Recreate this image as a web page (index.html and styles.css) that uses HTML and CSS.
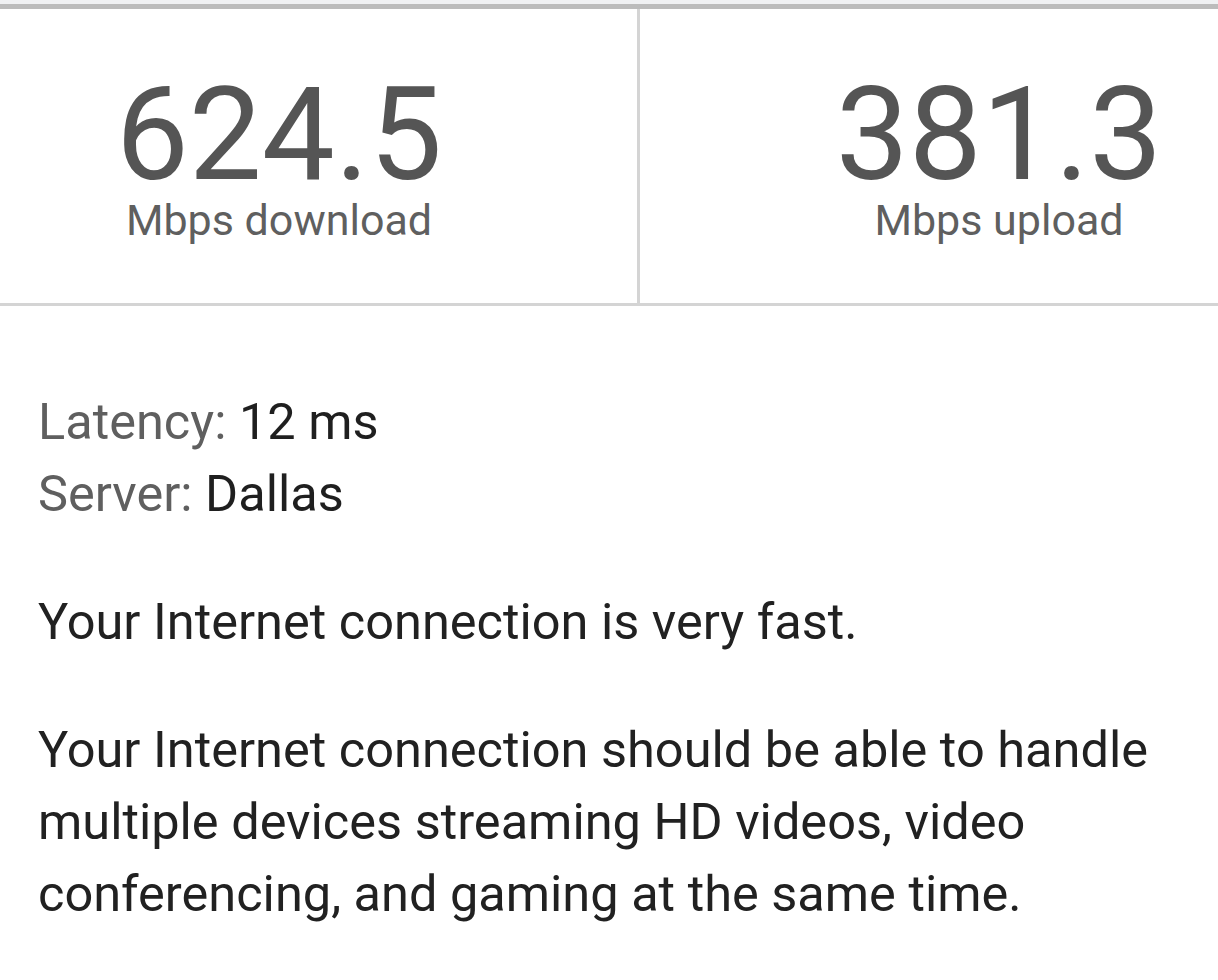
FILE: index.html
```html
<!DOCTYPE html>
<html lang="en">
<head>
  <meta charset="UTF-8" />
  <meta name="viewport" content="width=device-width, initial-scale=1.0"/>
  <title>Speed Test Result</title>
  <link rel="stylesheet" href="styles.css">
</head>
<body>
  <div class="top-strip"></div>

  <div class="stats">
    <div class="stat stat-down">
      <div class="stat-value">624.5</div>
      <div class="stat-unit">Mbps download</div>
    </div>
    <div class="stat stat-up">
      <div class="stat-value">381.3</div>
      <div class="stat-unit">Mbps upload</div>
    </div>
  </div>

  <div class="details">
    <div class="meta">
      <div><span class="meta-label">Latency:</span> 12 ms</div>
      <div><span class="meta-label">Server:</span> Dallas</div>
    </div>

    <p>Your Internet connection is very fast.</p>
    <p>Your Internet connection should be able to handle multiple devices streaming HD videos, video conferencing, and gaming at the same time.</p>
  </div>
</body>
</html>
```

FILE: styles.css
```css
body {
  font-family: Roboto, 'Noto Sans', sans-serif;
  margin: 0;
  background: #ffffff;
  color: #212121;
  overflow: hidden;
}
.top-strip {
  height: 4px;
  background: #f0f1f3;
}
.stats {
  display: grid;
  grid-template-columns: 637px 1fr;
  height: 294px;
  border-top: 5px solid #bcbcbc;
  border-bottom: 3px solid #d4d4d4;
}
.stat {
  display: flex;
  flex-direction: column;
  align-items: center;
  padding-top: 67px;
}
.stat-down {
  padding-right: 79px;
}
.stat-up {
  border-left: 3px solid #d4d4d4;
  padding-left: 140px;
}
.stat-value {
  font-size: 130px;
  line-height: 0.9;
  color: #555555;
}
.stat-unit {
  font-size: 43px;
  line-height: 1.2;
  margin-top: 2px;
  color: #5f5f5f;
}
.details {
  padding: 80px 38px 0 38px;
  font-size: 50.5px;
  line-height: 72px;
}
.meta {
  color: #1f1f1f;
}
.meta-label {
  color: #5f5f5f;
}
.details p {
  margin: 56px 0 0 0;
}
```
